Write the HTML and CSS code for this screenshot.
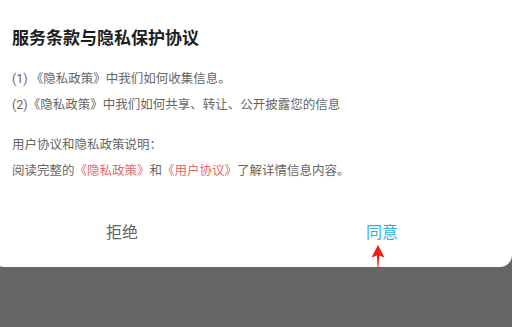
FILE: index.html
```html
<!DOCTYPE html>
<html lang="zh-CN">
<head>
  <meta charset="UTF-8">
  <meta name="viewport" content="width=device-width, initial-scale=1.0">
  <title>服务条款与隐私保护协议</title>
  <link rel="stylesheet" href="styles.css">
</head>
<body>
  <div class="dialog">
    <h1>服务条款与隐私保护协议</h1>

    <div class="dialog-body">
      <p>(1) 《隐私政策》中我们如何收集信息。</p>
      <p>(2)《隐私政策》中我们如何共享、转让、公开披露您的信息</p>
      <p class="gap">用户协议和隐私政策说明：</p>
      <p>阅读完整的<a href="#">《隐私政策》</a>和<a href="#">《用户协议》</a>了解详情信息内容。</p>
    </div>

    <div class="dialog-actions">
      <button class="btn-refuse">拒绝</button>
      <button class="btn-agree">同意</button>
    </div>

    <!-- 标注箭头 -->
    <svg class="arrow" width="16" height="24" viewBox="0 0 16 24">
      <path d="M8 0 L14.5 12.5 L9.2 10.5 L8.3 23.5 L7.7 23.5 L6.8 10.5 L1.5 12.5 Z" fill="#f41c12"/>
    </svg>
  </div>
</body>
</html>
```

FILE: styles.css
```css
* {
  margin: 0;
  padding: 0;
  box-sizing: border-box;
}

body {
  font-family: Roboto, "Noto Sans CJK SC", sans-serif;
  background: #666666;
  width: 512px;
  height: 327px;
  overflow: hidden;
}

.dialog {
  position: relative;
  background: white;
  width: 520px;
  height: 267px;
  margin-left: -8px;
  border-radius: 0 0 12px 12px;
  padding: 27px 0 0 20px;
}

h1 {
  font-size: 17px;
  font-weight: bold;
  color: #1e1e1e;
  line-height: 22px;
  margin-bottom: 17px;
}

.dialog-body p {
  font-size: 12.5px;
  color: #666;
  line-height: 26px;
}

.dialog-body p.gap {
  margin-top: 14px;
}

.dialog-body a {
  color: #e36a6a;
  text-decoration: none;
}

.dialog-actions {
  display: flex;
  margin-left: -20px;
  margin-top: 37px;
}

.dialog-actions button {
  flex: 1;
  background: none;
  border: none;
  font-family: inherit;
  font-size: 16px;
  line-height: 24px;
  cursor: pointer;
}

.btn-refuse {
  color: #666;
}

.btn-agree {
  color: #2bb3e3;
}

.arrow {
  position: absolute;
  left: 378px;
  top: 245px;
}
```
